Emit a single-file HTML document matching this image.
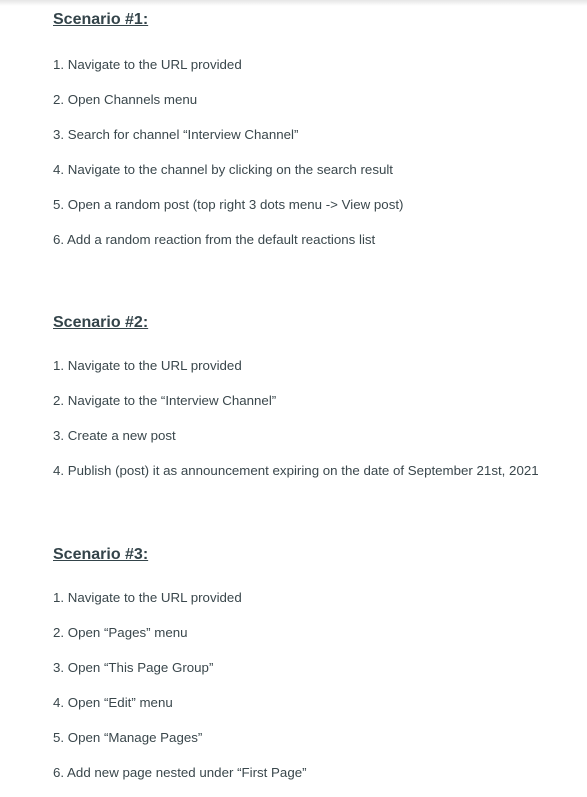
<!DOCTYPE html>
<html><head><meta charset="utf-8"><style>
html,body{margin:0;padding:0;background:#fff;width:587px;height:797px;overflow:hidden;position:relative;font-family:"Liberation Sans",Arial,sans-serif;}
.sh{position:absolute;left:0;top:0;width:587px;height:6px;background:linear-gradient(#e6e6e6,#fff);}
.h{position:absolute;left:53px;font-size:16px;font-weight:bold;color:#34444a;text-decoration:underline;line-height:20px;white-space:nowrap}
.i{position:absolute;left:53px;font-size:13.3px;color:#3a474c;line-height:16px;white-space:nowrap}
</style></head><body>
<div class="sh"></div>
<div class="h" style="top:10px">Scenario #1:</div>
<div class="i" style="top:57px">1. Navigate to the URL provided</div>
<div class="i" style="top:92px">2. Open Channels menu</div>
<div class="i" style="top:127px">3. Search for channel “Interview Channel”</div>
<div class="i" style="top:162px">4. Navigate to the channel by clicking on the search result</div>
<div class="i" style="top:197px">5. Open a random post (top right 3 dots menu -&gt; View post)</div>
<div class="i" style="top:232px">6. Add a random reaction from the default reactions list</div>
<div class="h" style="top:313px">Scenario #2:</div>
<div class="i" style="top:358px">1. Navigate to the URL provided</div>
<div class="i" style="top:393px">2. Navigate to the “Interview Channel”</div>
<div class="i" style="top:428px">3. Create a new post</div>
<div class="i" style="top:463px">4. Publish (post) it as announcement expiring on the date of September 21st, 2021</div>
<div class="h" style="top:545px">Scenario #3:</div>
<div class="i" style="top:590px">1. Navigate to the URL provided</div>
<div class="i" style="top:625px">2. Open “Pages” menu</div>
<div class="i" style="top:660px">3. Open “This Page Group”</div>
<div class="i" style="top:695px">4. Open “Edit” menu</div>
<div class="i" style="top:730px">5. Open “Manage Pages”</div>
<div class="i" style="top:765px">6. Add new page nested under “First Page”</div>
</body></html>
